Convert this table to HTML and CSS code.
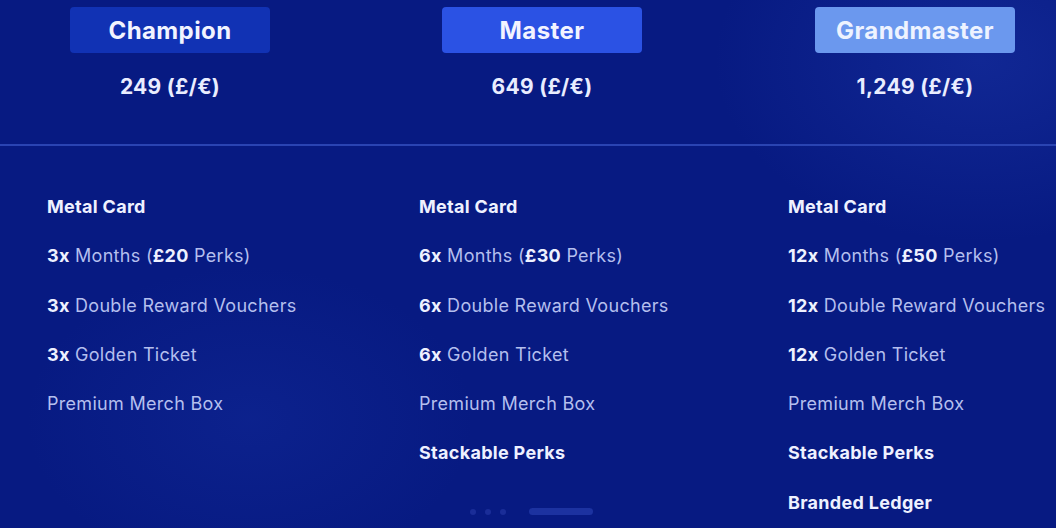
FILE: index.html
```html
<!DOCTYPE html>
<html lang="en">
<head>
  <meta charset="UTF-8">
  <meta name="viewport" content="width=device-width, initial-scale=1">
  <title>Membership Tiers</title>
  <link rel="stylesheet" href="styles.css">
</head>
<body>

  <div class="tiers">
    <div class="tier-head">
      <div class="badge champion">Champion</div>
      <div class="price">249 (£/€)</div>
    </div>
    <div class="tier-head">
      <div class="badge master">Master</div>
      <div class="price">649 (£/€)</div>
    </div>
    <div class="tier-head">
      <div class="badge grandmaster">Grandmaster</div>
      <div class="price">1,249 (£/€)</div>
    </div>
  </div>

  <div class="divider"></div>

  <div class="perks">
    <ul class="perk-list">
      <li><b>Metal Card</b></li>
      <li><b>3x</b> Months (<b>£20</b> Perks)</li>
      <li><b>3x</b> Double Reward Vouchers</li>
      <li><b>3x</b> Golden Ticket</li>
      <li>Premium Merch Box</li>
    </ul>
    <ul class="perk-list">
      <li><b>Metal Card</b></li>
      <li><b>6x</b> Months (<b>£30</b> Perks)</li>
      <li><b>6x</b> Double Reward Vouchers</li>
      <li><b>6x</b> Golden Ticket</li>
      <li>Premium Merch Box</li>
      <li><b>Stackable Perks</b></li>
    </ul>
    <ul class="perk-list">
      <li><b>Metal Card</b></li>
      <li><b>12x</b> Months (<b>£50</b> Perks)</li>
      <li><b>12x</b> Double Reward Vouchers</li>
      <li><b>12x</b> Golden Ticket</li>
      <li>Premium Merch Box</li>
      <li><b>Stackable Perks</b></li>
      <li><b>Branded Ledger</b></li>
    </ul>
  </div>

  <div class="pager">
    <span class="dot"></span>
    <span class="dot"></span>
    <span class="dot"></span>
    <span class="bar"></span>
  </div>

</body>
</html>
```

FILE: styles.css
```css
body {
  margin: 0;
  width: 1056px;
  height: 528px;
  overflow: hidden;
  position: relative;
  font-family: Inter, "Noto Sans", sans-serif;
  color: #e9edff;
  background:
    radial-gradient(ellipse 380px 260px at 980px 60px, rgba(40, 70, 190, 0.3), transparent 70%),
    radial-gradient(ellipse 320px 220px at 250px 420px, rgba(30, 60, 180, 0.22), transparent 70%),
    #071a82;
}
.tiers {
  display: grid;
  grid-template-columns: 372px 373px 200px;
  padding: 7px 0 0 70px;
  height: 137px;
}
.tier-head {
  width: 200px;
  display: flex;
  flex-direction: column;
  align-items: center;
}
.badge {
  width: 200px;
  height: 46px;
  border-radius: 4px;
  display: flex;
  align-items: center;
  justify-content: center;
  font-size: 24px;
  letter-spacing: 0.4px;
  font-weight: 700;
  color: #f2f4ff;
}
.champion {
  background: #1132b4;
}
.master {
  background: #2b52e4;
}
.grandmaster {
  background: #6b98ee;
  color: #eef3ff;
}
.price {
  margin-top: 22px;
  font-size: 21px;
  letter-spacing: 0.3px;
  line-height: 24px;
  font-weight: 700;
}
.divider {
  height: 2px;
  background: #2a44b2;
}
.perks {
  display: grid;
  grid-template-columns: 372px 369px 1fr;
  padding: 51px 0 0 47px;
}
.perk-list {
  list-style: none;
  margin: 0;
  padding: 0;
  display: flex;
  flex-direction: column;
  gap: 29.3px;
}
.perk-list li {
  font-size: 18px;
  letter-spacing: 0.3px;
  line-height: 20px;
  color: #b4bfee;
  white-space: nowrap;
}
.perk-list b {
  color: #eef1ff;
  font-weight: 700;
}
.pager {
  position: absolute;
  left: 470px;
  top: 508px;
  display: flex;
  align-items: center;
  gap: 9px;
}
.dot {
  width: 6px;
  height: 6px;
  border-radius: 50%;
  background: #1a2d98;
}
.bar {
  width: 64px;
  height: 7px;
  border-radius: 4px;
  background: #1c32a0;
  margin-left: 14px;
}
```
